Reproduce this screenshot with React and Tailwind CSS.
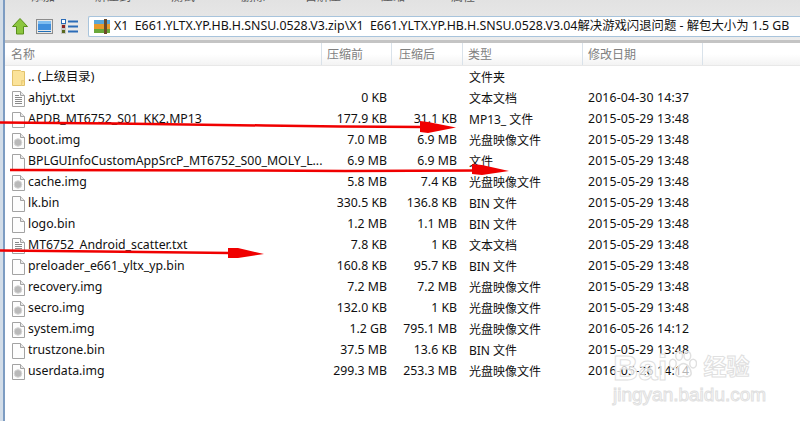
import React from "react";

const font = { fontFamily: '"Noto Sans", "Noto Sans CJK SC", sans-serif' };

const rows = [
  { name: ".. (上级目录)", icon: "folder", type: "文件夹" },
  { name: "ahjyt.txt", icon: "txt", before: "0 KB", after: "", type: "文本文档", date: "2016-04-30 14:37" },
  { name: "APDB_MT6752_S01_KK2.MP13", icon: "file", before: "177.9 KB", after: "31.1 KB", type: "MP13_ 文件", date: "2015-05-29 13:48" },
  { name: "boot.img", icon: "img", before: "7.0 MB", after: "6.9 MB", type: "光盘映像文件", date: "2015-05-29 13:48" },
  { name: "BPLGUInfoCustomAppSrcP_MT6752_S00_MOLY_L...", icon: "file", before: "6.9 MB", after: "6.9 MB", type: "文件", date: "2015-05-29 13:48" },
  { name: "cache.img", icon: "img", before: "5.8 MB", after: "7.4 KB", type: "光盘映像文件", date: "2015-05-29 13:48" },
  { name: "lk.bin", icon: "file", before: "330.5 KB", after: "136.8 KB", type: "BIN 文件", date: "2015-05-29 13:48" },
  { name: "logo.bin", icon: "file", before: "1.2 MB", after: "1.1 MB", type: "BIN 文件", date: "2015-05-29 13:48" },
  { name: "MT6752_Android_scatter.txt", icon: "txt", before: "7.8 KB", after: "1 KB", type: "文本文档", date: "2015-05-29 13:48" },
  { name: "preloader_e661_yltx_yp.bin", icon: "file", before: "160.8 KB", after: "95.7 KB", type: "BIN 文件", date: "2015-05-29 13:48" },
  { name: "recovery.img", icon: "img", before: "7.2 MB", after: "7.2 MB", type: "光盘映像文件", date: "2015-05-29 13:48" },
  { name: "secro.img", icon: "img", before: "132.0 KB", after: "1 KB", type: "光盘映像文件", date: "2015-05-29 13:48" },
  { name: "system.img", icon: "img", before: "1.2 GB", after: "795.1 MB", type: "光盘映像文件", date: "2016-05-26 14:12" },
  { name: "trustzone.bin", icon: "file", before: "37.5 MB", after: "13.6 KB", type: "BIN 文件", date: "2015-05-29 13:48" },
  { name: "userdata.img", icon: "img", before: "299.3 MB", after: "253.3 MB", type: "光盘映像文件", date: "2016-05-26 14:14" },
];

const tools = ["添加", "解压到", "测试", "删除", "自解压", "压缩", "属性"];

function FileIcon({ kind }) {
  if (kind === "folder") {
    return (
      <svg width="13" height="16" viewBox="0 0 13 16">
        <path d="M.5.500h8l1 1h3v14H.5z" fill="#fbe39a" stroke="#e2c26b" />
        <path d="M9.500 15.500v-5h3" fill="#f7d87e" stroke="#e8cd80" />
      </svg>
    );
  }
  return (
    <svg width="13" height="16" viewBox="0 0 13 16">
      <path d="M.5.500h8l4 4v11H.5z" fill="#fdfdfd" stroke="#a3a3a3" />
      <path d="M8.500.500v4h4" fill="#e8e8e8" stroke="#a3a3a3" />
      {kind === "txt" && <path d="M3 4.500h4M3 6.500h7M3 8.500h7M3 10.500h7M3 12.500h7" stroke="#8a8a8a" />}
      {kind === "img" && <circle cx="6" cy="9.500" r="3.800" fill="#b9b9b9" stroke="#d8d8d8" />}
    </svg>
  );
}

function Annotations() {
  return (
    <svg className="absolute inset-0 pointer-events-none" width="800" height="421" viewBox="0 0 800 421">
      <g fill="none" stroke="#f00000" strokeWidth="2.500">
        <path d="M0 122.500L115 123.500L265 125.500L340 126.500L425 127" />
        <path d="M10 170L258 170.500L345 171L480 170.500" />
        <path d="M0 250.500L100 251.500L230 253" />
      </g>
      <g fill="#f00000">
        <path d="M420 121L428 122L456 127.500L428 133L420 132z" />
        <path d="M472 164L482 165L509 171L482 175L472 174z" />
        <path d="M228 248L238 248L264 254L238 258L228 258z" />
      </g>
    </svg>
  );
}

function Watermark() {
  return (
    <div className="absolute left-[613px] top-[352px] w-[150px] pointer-events-none text-white/75 [-webkit-text-stroke:1px_#e0e0e0]" style={{ fontFamily: '"Liberation Sans", "Noto Sans CJK SC", sans-serif' }}>
      <div className="flex items-center h-[30px] font-bold">
        <span className="text-[35px] leading-none">Bai</span>
        <svg width="29" height="29" viewBox="0 0 30 30" className="-mt-1 ml-[1px] shrink-0">
          <g fill="#ffffffb0" stroke="#e0e0e0" strokeWidth="1.500">
            <ellipse cx="5" cy="13" rx="3.500" ry="4.500" />
            <ellipse cx="11.500" cy="5" rx="3.500" ry="4.500" />
            <ellipse cx="20" cy="5" rx="3.500" ry="4.500" />
            <ellipse cx="26" cy="13" rx="3.500" ry="4.500" />
            <path d="M16 13c4 0 8 6 8 10 0 4-5 4-8 3-3 1-8 1-8-3 0-4 4-10 8-10z" />
          </g>
        </svg>
        <span className="ml-[6px] text-[23px] leading-none whitespace-nowrap">经验</span>
      </div>
      <div className="mt-[3px] text-[19px] leading-[20px] whitespace-nowrap">jingyan.baidu.com</div>
    </div>
  );
}

export default function App() {
  return (
    <div className="relative flex w-[800px] h-[421px] overflow-hidden bg-white text-[12.300px] text-[#101010]" style={font}>
      {/* window edge */}
      <div className="w-[5px] shrink-0 bg-[#d3dde8] border-r-2 border-[#7d9cc2]" />

      <div className="flex-1 min-w-0">
        {/* toolbar, cut off at the top of the screenshot */}
        <div className="h-[43px] bg-gradient-to-b from-[#e2e2e2] to-[#ececec] border-b-[3px] border-[#c4c4c4] overflow-hidden">
          <div className="h-[15px] flex pl-[3px] overflow-hidden">
            {tools.map((t) => (
              <div key={t} className="w-[70px] shrink-0 text-center text-[#5a5a5a] text-[12px] leading-[16px] -mt-[11px]">
                {t}
              </div>
            ))}
          </div>
          <div className="flex items-center h-[22px] pl-[7px]">
            <svg width="16" height="17" viewBox="0 0 16 17" className="shrink-0">
              <path d="M8 .5L15.500 8.500H11.500V16H4.500V8.500H.5z" fill="#8cc63f" stroke="#5a8f1c" />
            </svg>
            <svg width="17" height="15" viewBox="0 0 17 15" className="ml-[8px] shrink-0">
              <rect x=".5" y=".5" width="16" height="14" fill="#e8e8e8" stroke="#8c8c8c" />
              <rect x="2" y="2" width="13" height="9" fill="#3f8edc" />
              <path d="M2 2h13v3H2z" fill="#7fbdf0" />
              <rect x="2" y="12" width="13" height="1" fill="#1f6fb8" />
            </svg>
            <svg width="17" height="15" viewBox="0 0 17 15" className="ml-[8px] shrink-0">
              <rect x=".5" y=".5" width="4" height="4" fill="#fff" stroke="#2b6cb8" />
              <rect x=".5" y="5.500" width="4" height="4" fill="#8a2020" stroke="#c8c8c8" />
              <rect x=".5" y="10.500" width="4" height="4" fill="#5a6a20" stroke="#c8c8c8" />
              <path d="M7 2.500h10M7 7.500h10M7 12.500h10" stroke="#2b6cb8" strokeWidth="2" />
            </svg>
            <div className="ml-[10px] flex-1 h-[21px] flex items-center bg-white border border-r-0 border-[#a8c4dc] rounded-l-[2px] pl-[5px] overflow-hidden">
              <svg width="16" height="15" viewBox="0 0 16 15" className="shrink-0">
                <rect y="1" width="16" height="4" fill="#5aa6d8" />
                <rect y="5" width="16" height="5" fill="#e89a2c" />
                <rect y="10" width="16" height="4" fill="#6aa83a" />
                <rect x="10" y="0" width="3" height="15" fill="#6b4a2a" />
              </svg>
              <span className="ml-[4px] whitespace-pre text-[12.370px] text-[#111]">
                {"X1  E661.YLTX.YP.HB.H.SNSU.0528.V3.zip\\X1  E661.YLTX.YP.HB.H.SNSU.0528.V3.04解决游戏闪退问题 - 解包大小为 1.5 GB"}
              </span>
            </div>
          </div>
        </div>

        {/* column headers */}
        <div className="flex h-[23px] bg-gradient-to-b from-white from-50% to-[#f3f3f3] border-b border-[#e8e8e8] text-[12px] text-[#808080]">
          <div className="w-[317px] pl-[6px] border-r border-[#d9e2ea] leading-[24px]">名称</div>
          <div className="w-[70px] pl-[5px] border-r border-[#d9e2ea] leading-[24px]">压缩前</div>
          <div className="w-[71px] pl-[7px] border-r border-[#d9e2ea] leading-[24px]">压缩后</div>
          <div className="w-[120px] pl-[5px] border-r border-[#d9e2ea] leading-[24px]">类型</div>
          <div className="w-[120px] pl-[5px] border-r border-[#d9e2ea] leading-[24px]">修改日期</div>
        </div>

        {/* file list */}
        <div className="pt-[1px]">
          {rows.map((r) => (
            <div key={r.name} className="flex h-[21px] items-center">
              <div className="w-[317px] shrink-0 flex items-center pl-[7px]">
                <span className="w-[13px] flex justify-center">
                  <FileIcon kind={r.icon} />
                </span>
                <span className="ml-[3px] whitespace-nowrap">{r.name}</span>
              </div>
              <div className="w-[70px] shrink-0 text-right pr-[5px]">{r.before}</div>
              <div className="w-[71px] shrink-0 text-right pr-[6px] whitespace-nowrap">{r.after}</div>
              <div className="w-[120px] shrink-0 pl-[6px] text-[12px]">{r.type}</div>
              <div className="w-[120px] shrink-0 pl-[5px] whitespace-nowrap tracking-[0.150px]">{r.date}</div>
            </div>
          ))}
        </div>
      </div>

      <Annotations />
      <Watermark />
    </div>
  );
}
